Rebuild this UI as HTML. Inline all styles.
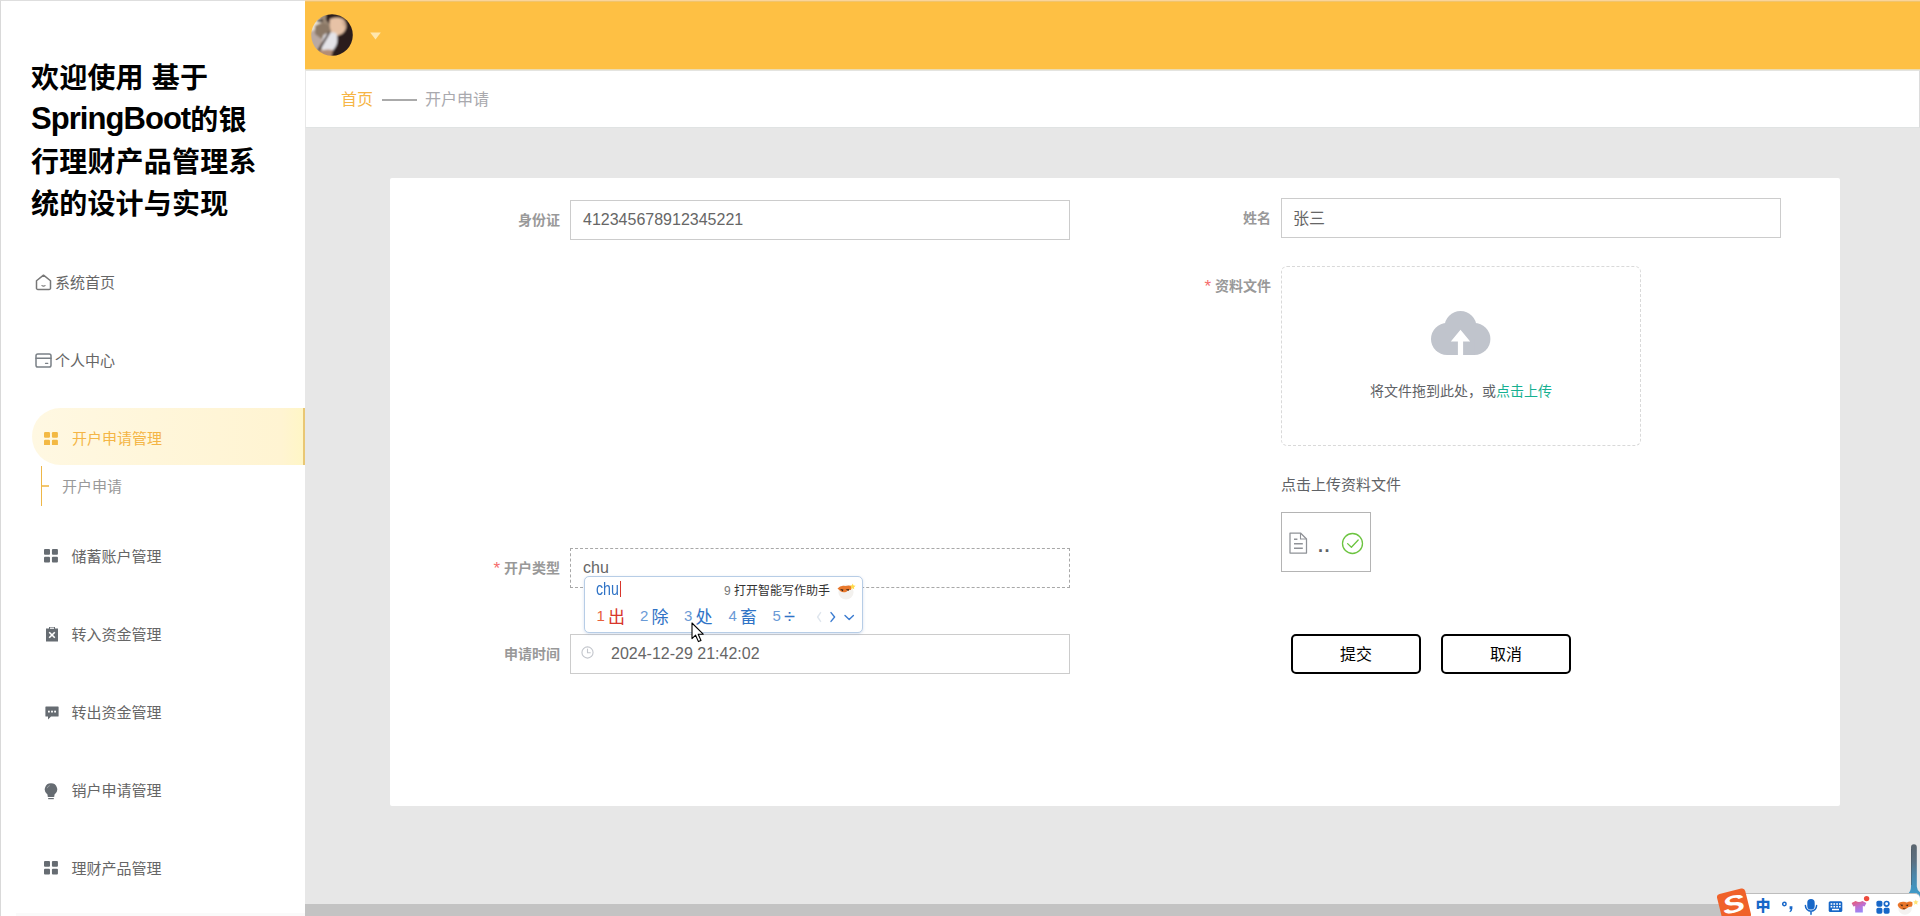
<!DOCTYPE html>
<html lang="zh-CN">
<head>
<meta charset="utf-8">
<title>开户申请</title>
<style>
*{box-sizing:border-box;margin:0;padding:0}
html,body{width:1920px;height:916px;overflow:hidden;background:#e7e7e7}
body{font-family:"Liberation Sans","Noto Sans CJK SC",sans-serif;position:relative;color:#666}
.abs{position:absolute}
/* ---------- sidebar ---------- */
#side{position:absolute;left:0;top:0;width:305px;height:916px;background:#fff;border-left:1px solid #d9d9d9;border-top:1px solid #dedede}
#side h1{position:absolute;left:30px;top:57px;font-size:28px;line-height:42px;font-weight:700;color:#000;white-space:nowrap;letter-spacing:.2px}
#side h1 .lat{letter-spacing:-.95px;font-size:31px;line-height:30px;position:relative;top:-1.2px}
.mi{position:absolute;left:0;width:303px;height:58px;line-height:58px;font-size:15px;color:#666;white-space:nowrap}
.mi svg{position:absolute}
.mi span{position:absolute;top:0}
.mi.top span{left:54px}
.mi.grp span{left:70.5px}
.mi.act{left:31px;width:273px;height:57px;line-height:62px;border-radius:29px 0 0 29px;background:linear-gradient(90deg,#fff8e2 0%,#fff6da 45%,#fff4d2 92%,#fff6c6 100%);border-right:2.5px solid #e9c774;color:#f4b545}
.mi.act span{left:40px}
.sub{position:absolute;left:40px;top:465px;width:200px;height:40px;border-left:1px solid #eeb748;line-height:42px;font-size:15px;color:#999}
.sub i{position:absolute;left:0;top:19px;width:7px;height:2px;background:#f3c76f}
.sub span{position:absolute;left:20px}
/* ---------- header ---------- */
#hdr{position:absolute;left:305px;top:0;width:1615px;height:70px;background:#fec044;border-top:1px solid #fad49a;border-bottom:1px solid #ecdcae;box-shadow:inset 0 1px 0 #f0c46e}
#crumb{position:absolute;left:305px;top:70px;width:1615px;height:58px;background:#fff;font-size:16px;line-height:58px;border-top:1px solid #e4e4e0;border-left:1px solid #e8e8e8;border-right:1px solid #dcdcdc;border-bottom:1px solid #e0e3e3}
#crumb .h{position:absolute;left:35px;top:0;color:#f6b545}
#crumb .ln{position:absolute;left:76px;top:28px;width:35px;height:2px;background:#aaa}
#crumb .c{position:absolute;left:119px;top:0;color:#a9a9ae}
/* ---------- card ---------- */
#card{position:absolute;left:390px;top:178px;width:1450px;height:628px;background:#fff;border-radius:2px}
.lbl{position:absolute;font-size:13.5px;font-weight:700;color:#999;text-align:right;white-space:nowrap;height:40px;line-height:40px}
.lbl b{color:#f56c6c;font-weight:400;margin-right:4px;font-family:"Liberation Sans",sans-serif;font-size:17px;position:relative;top:.5px;line-height:0}
.inp{position:absolute;width:500px;height:40px;border:1px solid #ccc;background:#fff;font-size:16px;line-height:38px;color:#666;padding-left:12px;white-space:nowrap}
.btn{position:absolute;width:130px;height:40px;border:2px solid #000;border-radius:5px;background:#fff;color:#000;font-size:16px;line-height:37px;text-align:center}

.lbl{font-size:14px}
.up{position:absolute;left:891px;top:88px;width:360px;height:180px;border:1px dashed #d9d9d9;border-radius:6px;background:#fff;text-align:center}
.up svg{position:absolute;left:149px;top:44px}
.up p{position:absolute;left:0;top:114px;width:358px;font-size:14px;line-height:20px;color:#606266}
.up p em{font-style:normal;color:#16b091}
.tip{position:absolute;left:891px;top:297px;font-size:15px;line-height:20px;color:#606266;white-space:nowrap}
.file{position:absolute;left:891px;top:334px;width:90px;height:60px;border:1px solid #b4b4b4;background:#fff}
.file svg{position:absolute}
.file span{position:absolute;left:36px;top:21px;font-size:18px;line-height:24px;color:#606266;letter-spacing:1.5px;font-weight:700}
/* IME */
#ime{position:absolute;left:584px;top:576px;width:279px;height:57px;background:#fff;border:1px solid #b7cde6;border-radius:5px;box-shadow:0 1px 3px rgba(90,130,190,.25);white-space:nowrap}
#ime .py{position:absolute;left:10.7px;top:3px;font-size:16px;line-height:20px;color:#2f73c6;transform:scale(.885,1.17);transform-origin:0 15.5px}
#ime .car{position:absolute;left:34.5px;top:4px;width:1px;height:16px;background:#d8362c}
#ime .ai{position:absolute;left:139px;top:5.5px;font-size:12px;line-height:16px;color:#333}
#ime .ai b{font-weight:400;color:#777}
#ime .cd{position:absolute;top:30px;height:22px;line-height:22px;font-size:17px;color:#2f73c6}
#ime .cd b{font-weight:400;font-size:15px;color:#6a9ad6;position:absolute;left:-11.5px;top:-1.6px}
#ime .cd.f{color:#d8362c}
#ime .cd.f b{color:#e8603c}
</style>
</head>
<body>
<!-- SIDEBAR -->
<div id="side">
  <h1>欢迎使用 基于<br><span class="lat">SpringBoot</span>的银<br>行理财产品管理系<br>统的设计与实现</h1>
  <div class="mi top" style="top:253px">
    <svg style="left:34px;top:20px" width="17" height="17" viewBox="0 0 17 18" preserveAspectRatio="none" fill="none" stroke="#777" stroke-width="1.5" stroke-linejoin="round" stroke-linecap="round"><path d="M1.5 7.2 L8.5 1.2 L15.5 7.2 V15 a1.4 1.4 0 0 1 -1.4 1.4 H2.9 A1.4 1.4 0 0 1 1.5 15 Z"/><path d="M7 12.3 q1.5 1.2 3 0" stroke-width="1.3"/></svg>
    <span>系统首页</span>
  </div>
  <div class="mi top" style="top:331px">
    <svg style="left:34px;top:21px" width="17" height="15" viewBox="0 0 17 15" fill="none" stroke="#7a8086" stroke-width="1.5" stroke-linejoin="round" stroke-linecap="round"><rect x="1" y="1" width="15" height="13" rx="1.8"/><path d="M1 5.2 H16"/><path d="M10.5 10.3 H12.8" stroke-width="1.3"/></svg>
    <span>个人中心</span>
  </div>
  <div class="mi grp act" style="top:407px">
    <svg style="left:12px;top:23.5px" width="14.5" height="13.6" viewBox="0 0 15 14" fill="#f3b944"><rect x="0" y="0" width="6.2" height="6" rx="1.2"/><rect x="8.2" y="0" width="6.2" height="6" rx="1.2"/><rect x="0" y="8" width="6.2" height="6" rx="1.2"/><rect x="8.2" y="8" width="6.2" height="6" rx="1.2"/></svg>
    <span>开户申请管理</span>
  </div>
  <div class="sub"><i></i><span>开户申请</span></div>
  <div class="mi grp" style="top:527px">
    <svg style="left:43px;top:21px" width="14.5" height="13.6" viewBox="0 0 15 14" fill="#666c72"><rect x="0" y="0" width="6.2" height="6" rx="1"/><rect x="8.2" y="0" width="6.2" height="6" rx="1"/><rect x="0" y="8" width="6.2" height="6" rx="1"/><rect x="8.2" y="8" width="6.2" height="6" rx="1"/></svg>
    <span>储蓄账户管理</span>
  </div>
  <div class="mi grp" style="top:605px">
    <svg style="left:43.5px;top:20px" width="14" height="16" viewBox="0 0 14 16"><path fill="#666c72" d="M1 2.4 H4 V1 H10 V2.4 H13 V15.4 H1 Z"/><path d="M5 1.6 H9 V2.8 H5 Z" fill="#fff"/><path d="M4.2 6.2 L9.8 11.8 M9.8 6.2 L4.2 11.8" stroke="#fff" stroke-width="1.6" fill="none"/></svg>
    <span>转入资金管理</span>
  </div>
  <div class="mi grp" style="top:683px">
    <svg style="left:43.5px;top:21.5px" width="14" height="14" viewBox="0 0 14 14"><path fill="#666c72" d="M1 0.4 H13 a.6 .6 0 0 1 .6 .6 V10 a.6 .6 0 0 1 -.6 .6 H6 L3 13.6 V10.6 H1 A.6 .6 0 0 1 .4 10 V1 A.6 .6 0 0 1 1 .4 Z"/><rect x="3" y="4.7" width="1.8" height="1.8" fill="#fff"/><rect x="6.1" y="4.7" width="1.8" height="1.8" fill="#fff"/><rect x="9.2" y="4.7" width="1.8" height="1.8" fill="#fff"/></svg>
    <span>转出资金管理</span>
  </div>
  <div class="mi grp" style="top:761px">
    <svg style="left:43px;top:20.5px" width="14" height="17" viewBox="0 0 14 17"><path fill="#666c72" d="M7 .3 a6.2 6.2 0 0 1 3.4 11.4 V13.2 a.8 .8 0 0 1 -.8 .8 H4.4 a.8 .8 0 0 1 -.8 -.8 V11.7 A6.2 6.2 0 0 1 7 .3 Z"/><rect x="4.2" y="15" width="5.6" height="1.2" fill="#666c72"/><path d="M3.2 5.2 a3.6 3.6 0 0 1 2.6 -2.6" stroke="#9aa0a5" stroke-width="1" fill="none"/></svg>
    <span>销户申请管理</span>
  </div>
  <div class="mi grp" style="top:839px">
    <svg style="left:43px;top:21px" width="14.5" height="13.6" viewBox="0 0 15 14" fill="#666c72"><rect x="0" y="0" width="6.2" height="6" rx="1"/><rect x="8.2" y="0" width="6.2" height="6" rx="1"/><rect x="0" y="8" width="6.2" height="6" rx="1"/><rect x="8.2" y="8" width="6.2" height="6" rx="1"/></svg>
    <span>理财产品管理</span>
  </div>
</div>
<!-- HEADER -->
<div id="hdr">
  <svg style="position:absolute;left:5.5px;top:13px" width="42" height="42" viewBox="0 0 42 42"><defs><clipPath id="av"><circle cx="21" cy="21" r="20.8"/></clipPath><filter id="avb" x="-10%" y="-10%" width="120%" height="120%"><feGaussianBlur stdDeviation=".8"/></filter></defs><g clip-path="url(#av)"><g filter="url(#avb)"><rect x="-3" y="-3" width="48" height="48" fill="#9c8a78"/><path d="M-2 6 L8 2 L10 8 L7 16 L-2 20 Z" fill="#ece4d6"/><path d="M-2 18 L8 14 L14 20 L9 36 L-2 38 Z" fill="#b9a9a2"/><path d="M4 12 q8 -6 15 0 l2 6 l-9 8 l-8 -6 Z" fill="#8b7866"/><path d="M6 5.6 h6 v2.2 h-6 Z" fill="#2a2020"/><path d="M15 -2 H44 V44 H16 q4 -5 6 -12 q3 -8 3 -12 q-4 -8 -10 -14 Z" fill="#2a1c1d"/><path d="M19 5 q7 -3 13 0 q4 4 3 9 q-2 6 -7 7 q-3 2 -5 1 q-3 -3 -4 -8 q-1 -5 0 -9 Z" fill="#e7c2a6"/><path d="M30 6 l5 4 l-1 5 Z" fill="#c9a58c"/><path d="M12.5 21 q6 -4 12.500 -2 q3 6 0 13 l-4 6 l-10 -1 q-1 -9 1.500 -16 Z" fill="#e4e3e8"/><path d="M6.4 36 L17.6 17.6 L19.4 18.6 L8.6 37 Z" fill="#4c3e3a"/><path d="M8 37 q7 -2.400 14 -1 l-2 8 H8 Z" fill="#b38d74"/></g></g></svg>
  <svg style="position:absolute;left:65px;top:31px" width="11" height="8" viewBox="0 0 11 8"><path d="M.2 .4 H10.8 L5.5 7.6 Z" fill="#ffe7ad"/></svg>
</div>
<div id="crumb"><span class="h">首页</span><i class="ln"></i><span class="c">开户申请</span></div>
<!-- CARD -->
<div id="card">
  <div class="lbl" style="left:0;width:170px;top:22px">身份证</div>
  <div class="inp" style="left:180px;top:22px">412345678912345221</div>
  <div class="lbl" style="left:700px;width:181px;top:20px">姓名</div>
  <div class="inp" style="left:891px;top:20px;padding-top:1px;padding-left:11px">张三</div>
  <div class="lbl" style="left:700px;width:181px;top:88px"><b>*</b>资料文件</div>
  <div class="up">
    <svg width="60" height="44" viewBox="0 0 60 44"><g fill="#c0c4cc"><circle cx="16" cy="28" r="16"/><circle cx="43.4" cy="28" r="16"/><circle cx="29.5" cy="16" r="16"/><rect x="16" y="28" width="27.4" height="16"/></g><path fill="#fff" d="M29.5 18.8 L39.2 30.4 H32.1 V44.2 H26.9 V30.4 H19.8 Z"/></svg>
    <p>将文件拖到此处，或<em>点击上传</em></p>
  </div>
  <div class="tip">点击上传资料文件</div>
  <div class="file">
    <svg style="left:6.5px;top:18.5px" width="19" height="22" viewBox="0 0 19 22" fill="none" stroke="#8f9297" stroke-width="1.25" stroke-linejoin="round"><path d="M1 1 H11.5 L17.5 7 V21 H1 Z"/><path d="M11.5 1 V7 H17.5" stroke-width="1.1"/><path d="M5 7.2 H8.4 M5 11.8 H13.8 M5 16.2 H13.8" stroke-width="1.5"/></svg>
    <span>..</span>
    <svg style="left:59px;top:18.5px" width="23" height="23" viewBox="0 0 23 23" fill="none" stroke="#6cc440" stroke-width="1.3" stroke-linecap="round" stroke-linejoin="round"><circle cx="11.5" cy="11.5" r="10"/><path d="M6.6 11.6 L10.4 15.2 L17.2 8"/></svg>
  </div>
  <div class="lbl" style="left:0;width:170px;top:370px"><b>*</b>开户类型</div>
  <div class="inp" style="left:180px;top:370px;border:1px dashed #a8a8a8">chu</div>
  <div class="lbl" style="left:0;width:170px;top:456px">申请时间</div>
  <div class="inp" style="left:180px;top:456px;padding-left:40px">
    <svg style="position:absolute;left:10px;top:11px" width="13" height="13" viewBox="0 0 14 14" fill="none" stroke="#c3c6cc" stroke-width="1.2" stroke-linecap="round"><circle cx="7" cy="7" r="6"/><path d="M7 3.4 V7.2 H10"/></svg>
    2024-12-29 21:42:02</div>
  <div class="btn" style="left:901px;top:456px">提交</div>
  <div class="btn" style="left:1051px;top:456px">取消</div>
</div>
<!-- IME CANDIDATE WINDOW -->
<div id="ime">
  <span class="py">chu</span><i class="car"></i>
  <span class="ai"><b>9</b> 打开智能写作助手</span>
  <svg style="position:absolute;left:251px;top:5px" width="20" height="18" viewBox="0 0 20 18"><circle cx="10" cy="10" r="7.6" fill="#f3f1ee"/><path d="M1.5 6.5 q3 -3.6 8 -2.4 q4 -1.6 6.4 .6 l-1 3.4 q-3 -.6 -4.4 1.6 q-3.4 1.4 -6 -.4 Z" fill="#e8782c"/><path d="M4 7 l3.4 .4 l-.6 2 Z M9.6 7.6 l3.4 -.6 l-.4 2 Z" fill="#3a2418"/><path d="M16.6 1.4 l1 2 l2 .4 l-1.6 1.4 l.2 2 l-1.8 -1 l-1.6 .8 l.4 -2 l-1.2 -1.6 l2 -.2 Z" fill="#ffd94a"/></svg>
  <span class="cd f" style="left:23px"><b>1</b>出</span>
  <span class="cd" style="left:66.5px"><b>2</b>除</span>
  <span class="cd" style="left:110.5px"><b>3</b>处</span>
  <span class="cd" style="left:155px"><b>4</b>畜</span>
  <span class="cd" style="left:199px;font-size:20px"><b style="left:-11.5px">5</b><i style="font-style:normal;position:relative;top:-2px">÷</i></span>
  <svg style="position:absolute;left:230px;top:33px" width="42" height="14" viewBox="0 0 42 14" fill="none" stroke-width="1.4" stroke-linecap="round" stroke-linejoin="round"><path d="M5.6 2.6 L2.6 7 L5.6 11.4" stroke="#dfe6ee"/><path d="M16 2.6 L19.6 7 L16 11.4" stroke="#3a7bd0"/><path d="M30 5.4 L34.2 9.4 L38.4 5.4" stroke="#3a7bd0"/></svg>
</div>
<!-- mouse cursor -->
<svg style="position:absolute;left:690.5px;top:622px" width="14" height="21" viewBox="0 0 14 21"><path d="M1 1 V16.6 L4.6 13.2 L7.4 19.6 L10 18.4 L7.2 12.2 H12.2 Z" fill="#fff" stroke="#000" stroke-width="1.1" stroke-linejoin="round"/></svg>
<div style="position:absolute;left:16px;top:913px;width:289px;height:3px;background:#fafafa"></div>
<!-- bottom scrollbar -->
<div style="position:absolute;left:305px;top:904px;width:1615px;height:12px;background:#c3c3c3"></div>
<!-- desktop widget -->
<svg style="position:absolute;left:1904px;top:843px" width="16" height="58" viewBox="0 0 16 58"><defs><linearGradient id="pg" x1="0" y1="0" x2="0" y2="1"><stop offset="0" stop-color="#5b656f"/><stop offset=".3" stop-color="#5a7082"/><stop offset=".55" stop-color="#4a86aa"/><stop offset="1" stop-color="#3aa2d4"/></linearGradient></defs><path d="M7 4.200 a2.900 2.900 0 0 1 5.800 0 V43.500 q.2 4 4.200 6.500 V58 H3 V51.500 q4 -2.500 4 -8 Z" fill="url(#pg)"/><path d="M7.500 6 V42" stroke="#46525c" stroke-width=".9" opacity=".55"/></svg>
<!-- SOGOU TOOLBAR -->
<div id="sg" style="position:absolute;left:1744px;top:893px;width:176px;height:23px;background:#fff;border-top:1px solid #bdbdbd;border-radius:0 5px 0 0">
  <span style="position:absolute;left:11.5px;top:3px;font-size:15px;line-height:18px;font-weight:900;color:#1767c8;font-family:'Liberation Sans','Noto Sans CJK SC',sans-serif">中</span>
  <svg style="position:absolute;left:36px;top:5px;overflow:visible" width="140" height="18" viewBox="0 0 140 18">
    <circle cx="4.4" cy="5" r="1.7" fill="none" stroke="#1767c8" stroke-width="1.5"/>
    <path d="M9.6 7.2 h2.8 v2.4 q0 2.6 -2.4 3.6 l-.6 -1 q1.2 -.7 1.3 -2 h-1.1 Z" fill="#1767c8"/>
    <rect x="27.3" y="0" width="7.4" height="10.6" rx="3.7" fill="#1767c8"/>
    <path d="M25.4 6.6 a5.6 5.6 0 0 0 11.2 0 M31 12.4 V15.2" fill="none" stroke="#1767c8" stroke-width="1.5" stroke-linecap="round"/>
    <rect x="48.7" y="2.2" width="13.6" height="10.8" rx="1.6" fill="#1767c8"/>
    <g fill="#fff"><rect x="50.6" y="4.2" width="1.7" height="1.6"/><rect x="53.4" y="4.2" width="1.7" height="1.6"/><rect x="56.2" y="4.2" width="1.7" height="1.6"/><rect x="59" y="4.2" width="1.7" height="1.6"/><rect x="50.6" y="6.9" width="1.7" height="1.6"/><rect x="53.4" y="6.9" width="1.7" height="1.6"/><rect x="56.2" y="6.9" width="1.7" height="1.6"/><rect x="59" y="6.9" width="1.7" height="1.6"/><rect x="52" y="9.8" width="7" height="1.5"/></g>
    <defs><linearGradient id="ts" x1="0" y1="0" x2=".5" y2="1"><stop offset="0" stop-color="#ee5866"/><stop offset=".55" stop-color="#c06fd0"/><stop offset="1" stop-color="#9a86f6"/></linearGradient></defs>
    <path d="M71.6 4 L75.6 2 q3.4 2 6.8 0 L86.4 4 L84.6 7.6 L82.8 7 V13.6 H75.2 V7 L73.4 7.6 Z" fill="url(#ts)"/>
    <circle cx="86.6" cy="-0.4" r="2.7" fill="#ee4b3c"/>
    <g fill="#1767c8"><rect x="96.400" y="1.800" width="6" height="6" rx="1.700"/><rect x="96.400" y="8.800" width="6" height="6" rx="1.700"/><rect x="103.600" y="8.800" width="6" height="6" rx="1.700"/></g>
    <circle cx="106.600" cy="4.800" r="2.300" fill="none" stroke="#1767c8" stroke-width="1.700"/>
    <circle cx="125" cy="9" r="6.8" fill="#f4f2f0"/>
    <path d="M117.6 6 q1 -3.2 5.6 -3.2 q2 0 3.6 .8 q3 -2 5.6 -.4 q.6 2.4 -.8 4.6 q-2.4 -.6 -4 1 q-2 2.4 -5.4 1.6 q-3.6 -1 -4.6 -4.4 Z" fill="#e9762b"/>
    <path d="M120 5.4 l3 .4 l-.8 1.8 Z M125.4 6 l3 -.6 l-.6 1.8 Z" fill="#3a2418"/>
    <path d="M122.8 9.4 q1.4 1 2.6 0" stroke="#3a2418" stroke-width=".8" fill="none"/>
    <path d="M135.8 .6 l.8 1.700 l1.900 .2 l-1.400 1.300 l.3 1.900 l-1.600 -.9 l-1.600 .9 l.3 -1.900 l-1.400 -1.300 l1.900 -.2 Z" fill="#ffe375"/>
  </svg>
</div>
<svg style="position:absolute;left:1713px;top:884px" width="40" height="32" viewBox="0 0 40 32"><g transform="rotate(-14 20 20)"><rect x="6" y="7" width="29" height="30" rx="3.4" fill="#f0622a"/><text x="0" y="0" text-anchor="middle" font-family="Liberation Sans,sans-serif" font-weight="700" font-style="italic" font-size="24" fill="#fff" transform="translate(20.5 28.5) scale(1.42 1)">S</text></g></svg>
</body>
</html>
